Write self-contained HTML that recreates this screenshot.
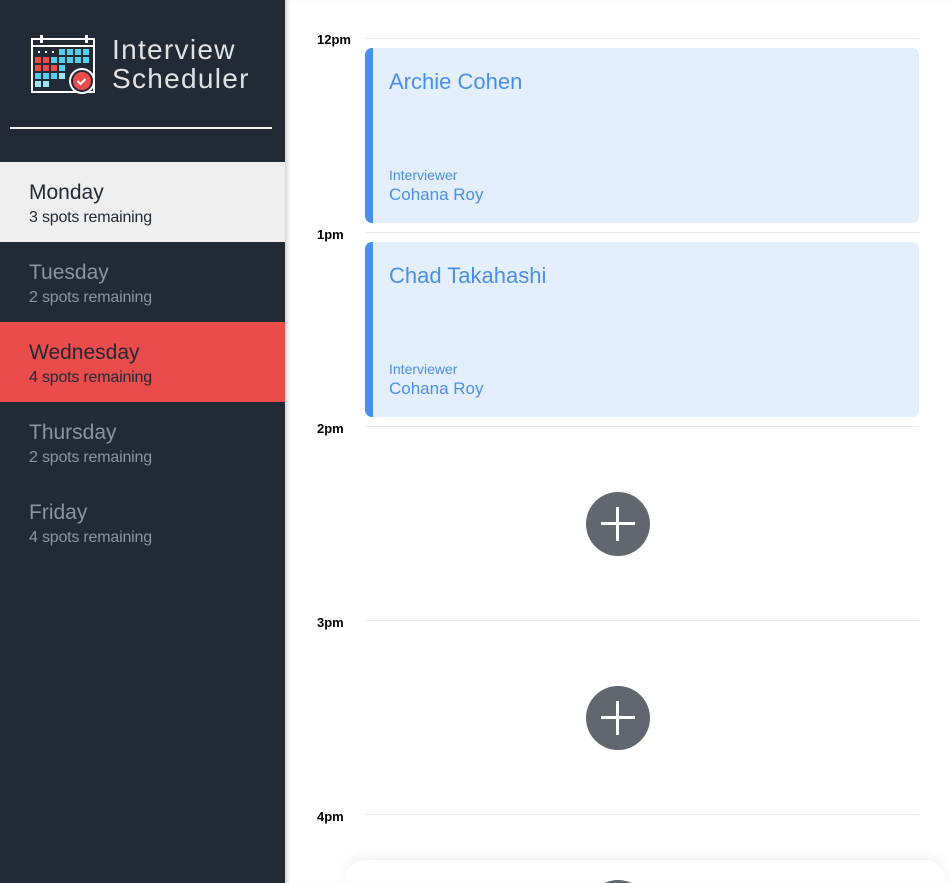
<!DOCTYPE html>
<html style="overflow:hidden;width:952px;height:883px"><head><style>
*{margin:0;padding:0;box-sizing:border-box}
body{width:952px;height:883px;overflow:hidden;font-family:"Liberation Sans",sans-serif;background:#fff;position:relative}
.side{position:absolute;left:0;top:0;width:285px;height:883px;background:#222a36}
.title{position:absolute;left:112px;top:35px;color:#e2e2e2;font-size:28px;line-height:29px;letter-spacing:1.3px}
.hr{position:absolute;left:10px;top:127px;width:262px;height:2px;background:#f2f2f2}
.day{position:absolute;left:0;width:285px;height:80px;padding:18px 0 0 29px;color:#8a94a3}
.day b{display:block;font-weight:normal;font-size:21px;line-height:25px}
.day span{display:block;font-size:16px;line-height:20px;margin-top:3px;letter-spacing:-0.2px}
.main{position:absolute;left:285px;top:0;width:667px;height:883px;overflow:hidden;box-shadow:inset 5px 0 5px -3px #ccc}
.t{position:absolute;left:32px;font-size:13px;font-weight:bold;color:#000}
.line{position:absolute;left:80px;width:554px;height:1px;background:#e8e8e8}
.card{position:absolute;left:80px;width:554px;height:175px;background:#e3eefe;border-left:8px solid #4a90f0;border-radius:7px;color:#4a8ff0}
.card .n{position:absolute;left:16px;top:21px;font-size:22px}
.card .i{position:absolute;left:16px;top:119px;font-size:14px}
.card .c{position:absolute;left:16px;top:137px;font-size:17px}
.plus{position:absolute;left:301px;width:64px;height:64px;border-radius:50%;background:#62666f}
.plus:before,.plus:after{content:"";position:absolute;background:#fff;left:15px;top:30px;width:34px;height:3px}
.plus:after{left:30px;top:15px;width:3px;height:34px}
</style></head><body>
<div class="side">
<svg style="position:absolute;left:30px;top:34px" width="66" height="62" viewBox="0 0 66 62">
<rect x="2" y="5" width="62" height="53" fill="none" stroke="#fff" stroke-width="2"/>
<line x1="2" y1="12" x2="64" y2="12" stroke="#fff" stroke-width="2"/>
<rect x="10" y="1" width="3" height="8" fill="#fff"/><rect x="55" y="1" width="3" height="8" fill="#fff"/>
<g fill="#fff"><rect x="8" y="17" width="2" height="2"/><rect x="15" y="17" width="2" height="2"/><rect x="22" y="17" width="2" height="2"/></g>
<g fill="#4fd1ee">
<rect x="29" y="15" width="6" height="6"/><rect x="37" y="15" width="6" height="6"/><rect x="45" y="15" width="6" height="6"/><rect x="53" y="15" width="6" height="6"/>
<rect x="21" y="23" width="6" height="6"/><rect x="29" y="23" width="6" height="6"/><rect x="37" y="23" width="6" height="6"/><rect x="45" y="23" width="6" height="6"/><rect x="53" y="23" width="6" height="6"/>
<rect x="29" y="31" width="6" height="6"/><rect x="5" y="39" width="6" height="6"/><rect x="13" y="39" width="6" height="6"/><rect x="21" y="39" width="6" height="6"/>
</g>
<g fill="#9be6f6"><rect x="29" y="39" width="6" height="6"/><rect x="5" y="47" width="6" height="6"/><rect x="13" y="47" width="6" height="6"/></g>
<g fill="#ef4b4b"><rect x="5" y="23" width="6" height="6"/><rect x="13" y="23" width="6" height="6"/><rect x="5" y="31" width="6" height="6"/><rect x="13" y="31" width="6" height="6"/><rect x="21" y="31" width="6" height="6"/></g>
<circle cx="52" cy="47" r="12" fill="#222a36" stroke="#fff" stroke-width="2"/>
<circle cx="52" cy="47" r="9" fill="#ef4b4b"/>
<path d="M47.5 47 l3 3 l5 -5" stroke="#fff" stroke-width="2" fill="none"/>
</svg>
<div class="title">Interview<br>Scheduler</div>
<div class="hr"></div>
<div class="day" style="top:162px;background:#efefef;color:#222a36"><b>Monday</b><span>3 spots remaining</span></div>
<div class="day" style="top:242px"><b>Tuesday</b><span>2 spots remaining</span></div>
<div class="day" style="top:322px;background:#ea4b4b;color:#222a36"><b>Wednesday</b><span>4 spots remaining</span></div>
<div class="day" style="top:402px"><b>Thursday</b><span>2 spots remaining</span></div>
<div class="day" style="top:482px"><b>Friday</b><span>4 spots remaining</span></div>
</div>
<div class="main">
<div class="t" style="top:32px">12pm</div><div class="line" style="top:38px"></div>
<div class="card" style="top:48px"><div class="n">Archie Cohen</div><div class="i">Interviewer</div><div class="c">Cohana Roy</div></div>
<div class="t" style="top:227px">1pm</div><div class="line" style="top:232px"></div>
<div class="card" style="top:242px"><div class="n">Chad Takahashi</div><div class="i">Interviewer</div><div class="c">Cohana Roy</div></div>
<div class="t" style="top:421px">2pm</div><div class="line" style="top:426px"></div>
<div class="plus" style="top:492px"></div>
<div class="t" style="top:615px">3pm</div><div class="line" style="top:620px"></div>
<div class="plus" style="top:686px"></div>
<div class="t" style="top:809px">4pm</div><div class="line" style="top:814px"></div>
<div style="position:absolute;left:60px;top:860px;width:600px;height:40px;border-radius:20px;box-shadow:0 -4px 12px rgba(0,0,0,0.06)"></div>
<div class="plus" style="top:880px"></div>
</div>
</body></html>
